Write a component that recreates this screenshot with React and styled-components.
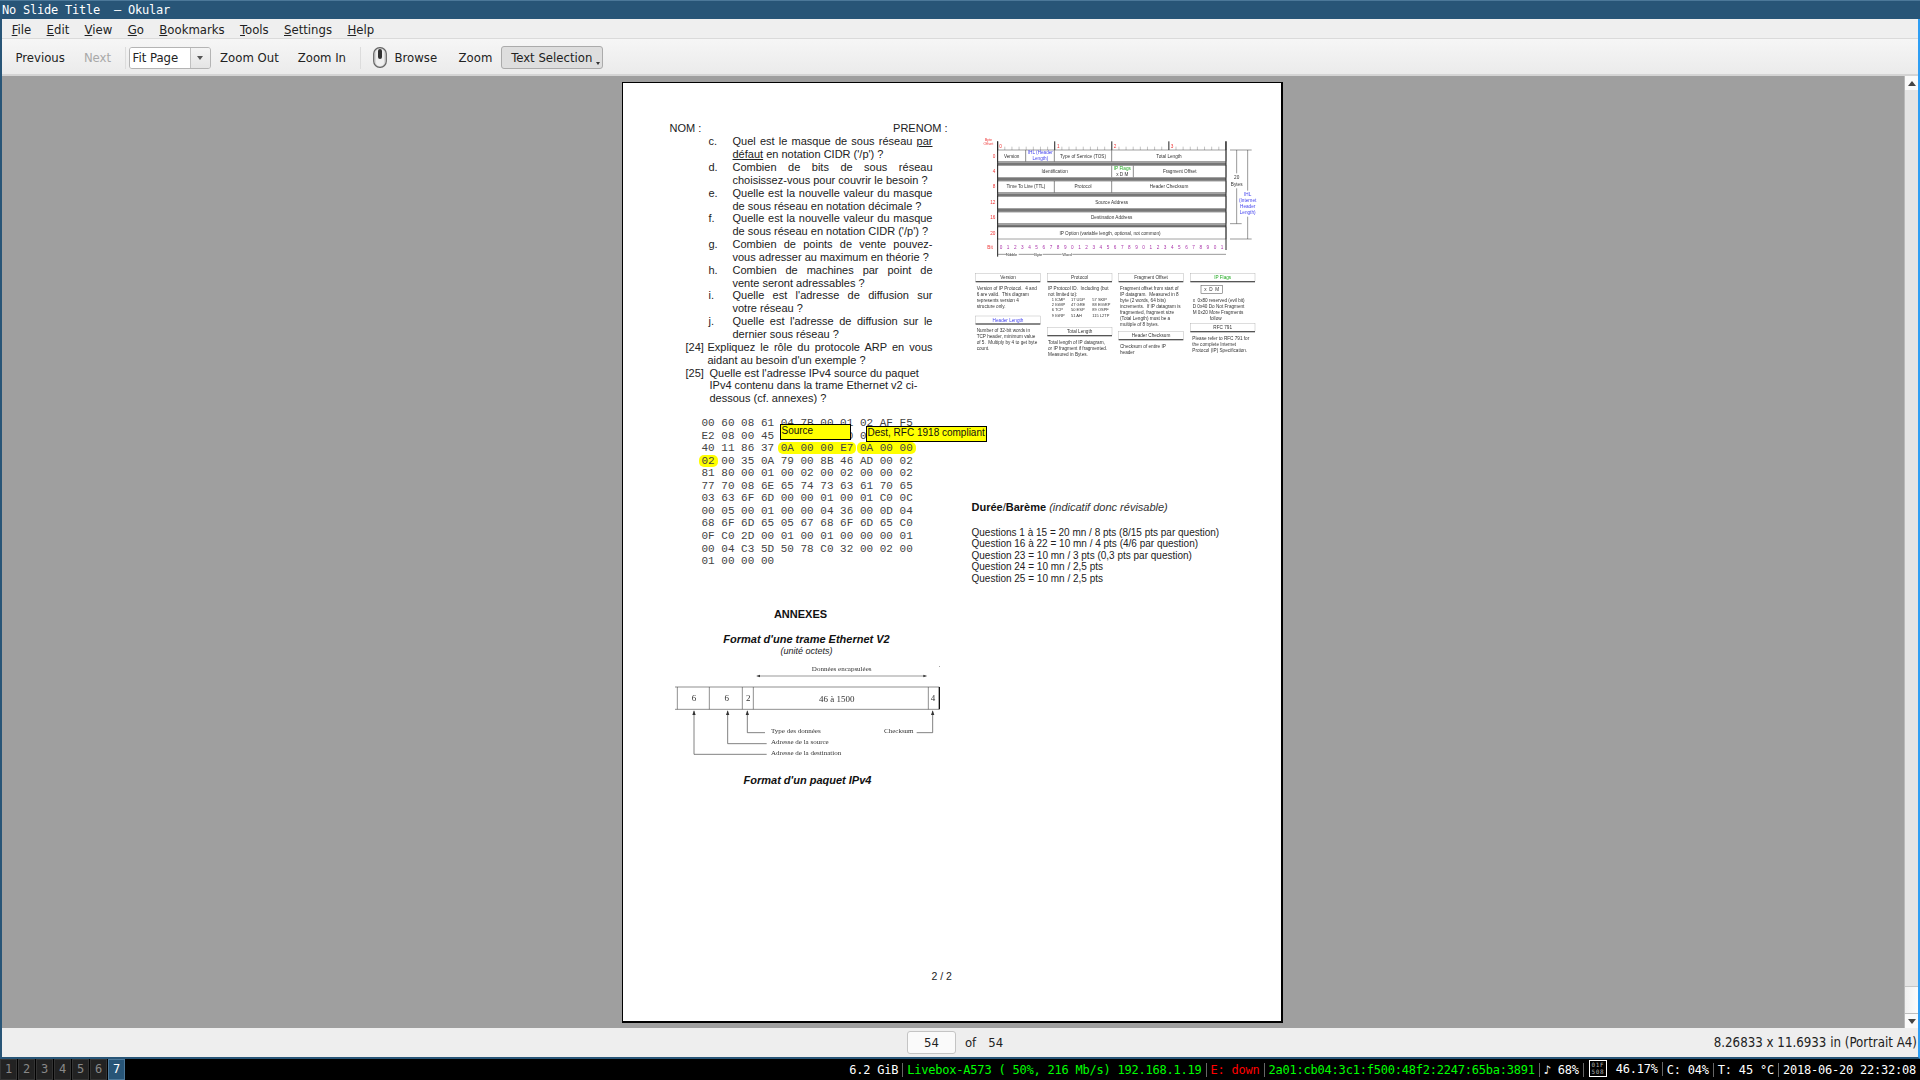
import styled, { createGlobalStyle } from 'styled-components';

const GlobalStyle = createGlobalStyle`
  html, body {
    margin: 0;
    padding: 0;
    width: 1920px;
    height: 1080px;
    overflow: hidden;
    background: #000;
  }
`;

const UI_FONT = '"DejaVu Sans Condensed", "DejaVu Sans", sans-serif';
const MONO_FONT = '"DejaVu Sans Mono", monospace';
const DOC_FONT = '"Liberation Sans", Arial, sans-serif';

// WINDOW
const Window = styled.div`
  width: 1920px;
  height: 1059px;
  box-sizing: border-box;
  display: flex;
  flex-direction: column;
  border-left: 2px solid #285577;
  border-right: 2px solid #2e9ef4;
  border-bottom: 2px solid #285577;
  background: #efefef;
`;

const TitleBar = styled.div`
  height: 19px;
  margin-left: -2px;
  margin-right: -2px;
  box-sizing: border-box;
  border-top: 1px solid #4c7899;
  background: #285577;
  color: #fff;
  font: 12px/18px ${MONO_FONT};
  letter-spacing: -0.22px;
  padding-left: 2px;
  white-space: pre;
`;

const MenuBar = styled.div`
  height: 20px;
  box-sizing: border-box;
  display: flex;
  align-items: center;
  padding: 1px 0 0 2px;
  background: #efefef;
  border-bottom: 1px solid #dadada;
  font: 13px ${UI_FONT};
  font-stretch: condensed;
  color: #222;
`;

const MenuItem = styled.span`
  padding: 0 7.7px;
  u {
    text-underline-offset: 1px;
  }
`;

const ToolBar = styled.div`
  height: 37px;
  box-sizing: border-box;
  display: flex;
  align-items: center;
  padding: 2px 0 0 4px;
  background: linear-gradient(#f6f6f6, #ebebeb);
  border-bottom: 2px solid #d4d4d4;
  font: 13px ${UI_FONT};
  font-stretch: condensed;
  color: #222;
`;

const ToolButton = styled.span`
  display: flex;
  align-items: center;
  gap: 7px;
  padding: 0 9.5px;
  color: ${(p) => (p.$disabled ? '#a8a8a8' : '#222')};
`;

const BrowseButton = styled(ToolButton)`
  gap: 8px;
  padding: 0 12px 0 9px;
`;

const ToolSeparator = styled.span`
  width: 1px;
  height: 22px;
  margin: 0 3px 0 4px;
  background: #dcdcdc;
`;

const Combo = styled.div`
  width: 82px;
  height: 22px;
  box-sizing: border-box;
  display: flex;
  border: 1px solid #b4b4b4;
  border-radius: 3px;
  overflow: hidden;
`;

const ComboValue = styled.span`
  flex: 1;
  padding-left: 3px;
  background: #fff;
  line-height: 20px;
`;

const ComboArrow = styled.span`
  width: 19px;
  border-left: 1px solid #c0c0c0;
  background: linear-gradient(#f4f4f4, #e4e4e4);
  display: flex;
  align-items: center;
  justify-content: center;
  &::after {
    content: '';
    border-left: 3.5px solid transparent;
    border-right: 3.5px solid transparent;
    border-top: 4px solid #555;
  }
`;

const ActiveButton = styled.span`
  position: relative;
  width: 102px;
  height: 23px;
  box-sizing: border-box;
  margin-left: -1px;
  text-align: center;
  line-height: 21px;
  background: #dedede;
  border: 1px solid #ababab;
  border-radius: 3px;
  &::after {
    content: '';
    position: absolute;
    right: 2px;
    bottom: 3px;
    border-left: 2.5px solid transparent;
    border-right: 2.5px solid transparent;
    border-top: 3px solid #333;
  }
`;

// DOCUMENT AREA
const Main = styled.div`
  flex: 1;
  display: flex;
  min-height: 0;
`;

const Viewport = styled.div`
  flex: 1;
  display: flex;
  justify-content: center;
  align-items: flex-start;
  padding: 6px 2px 0 0;
  background: #9f9f9f;
  overflow: hidden;
`;

const Page = styled.div`
  width: 661px;
  height: 941px;
  box-sizing: border-box;
  flex-shrink: 0;
  display: grid;
  grid-template-columns: 290px 1fr;
  border: 1px solid #000;
  border-right-width: 2px;
  border-bottom-width: 2px;
  background: #fff;
  color: #222;
  font: 11px ${DOC_FONT};
`;

const LeftColumn = styled.div`
  padding: 38.5px 0 0 47px;
  width: 290px;
  box-sizing: border-box;
`;

const RightColumn = styled.div`
  padding-top: 37px;
  margin-left: 47px;
`;

const NameRow = styled.div`
  width: 278px;
  display: flex;
  justify-content: space-between;
  line-height: 12.85px;
  margin-bottom: 1px;
`;

const Question = styled.div`
  display: grid;
  grid-template-columns: ${(p) => p.$label}px ${(p) => p.$width}px;
  margin-left: ${(p) => p.$indent}px;
  line-height: 12.85px;
`;

const QuestionLine = styled.div`
  text-align: left;
  text-align-last: ${(p) => (p.$justify ? 'justify' : 'left')};
  white-space: ${(p) => (p.$justify ? 'normal' : 'nowrap')};
`;

const HexDump = styled.div`
  position: relative;
  margin: 12px 0 0 32px;
  font: 11px/12.55px "Liberation Mono", "Courier New", monospace;
  color: #444;
  white-space: pre;
`;

const Mark = styled.span`
  background: #ffff00;
  border-radius: 5px;
  padding: 0 3px;
  margin: 0 -3px;
`;

const Note = styled.div`
  position: absolute;
  left: ${(p) => p.$left}px;
  top: ${(p) => p.$top}px;
  width: ${(p) => p.$width}px;
  height: 16px;
  box-sizing: border-box;
  padding-left: 1px;
  border: 1px solid #000;
  border-bottom-width: 1.5px;
  background: #ffff00;
  color: #111;
  font: 10px/12px ${DOC_FONT};
`;

const Heading = styled.div`
  width: 278px;
  box-sizing: border-box;
  margin-top: ${(p) => p.$top}px;
  padding-right: ${(p) => p.$shift}px;
  text-align: center;
  line-height: 13px;
  font-weight: bold;
  font-style: ${(p) => (p.$italic ? 'italic' : 'normal')};
  color: #111;
`;

const Unit = styled.div`
  width: 278px;
  box-sizing: border-box;
  padding-right: 4px;
  text-align: center;
  font-size: 9px;
  line-height: 10px;
  font-style: italic;
`;

const PageNumber = styled.div`
  margin: 183px 0 0 262px;
  font-size: 10.5px;
  line-height: 13px;
  white-space: nowrap;
`;

const Figure = styled.svg`
  display: block;
  filter: blur(0.35px);
  margin-top: ${(p) => p.$top || 0}px;
`;

const Duration = styled.div`
  margin: 131px 0 14px 12px;
  line-height: 12px;
  b {
    color: #111;
  }
  i {
    color: #333;
  }
`;

const Scale = styled.div`
  margin-left: 12px;
  font-size: 10px;
  line-height: 11.4px;
  white-space: nowrap;
`;

// SCROLLBAR
const ScrollBar = styled.div`
  width: 13px;
  display: flex;
  flex-direction: column;
  background: #e4e4e4;
  border-left: 1px solid #b9b9b9;
`;

const ScrollArrow = styled.div`
  height: 14px;
  flex-shrink: 0;
  display: flex;
  align-items: center;
  justify-content: center;
  background: #fafafa;
  &::after {
    content: '';
    border-left: 4px solid transparent;
    border-right: 4px solid transparent;
    ${(p) => (p.$up ? 'border-bottom: 5px solid #444;' : 'border-top: 5px solid #444;')}
  }
`;

const ScrollThumb = styled.div`
  flex: 1;
  background: #e4e4e4;
  border-bottom: 1px solid #c6c6c6;
`;

const ScrollTrack = styled.div`
  height: 26px;
  background: linear-gradient(90deg, #f0f0f0, #fcfcfc);
  border-bottom: 1px solid #bdbdbd;
`;

// BOTTOM BAR
const PageBar = styled.div`
  height: 29px;
  flex-shrink: 0;
  display: grid;
  grid-template-columns: 1fr auto 1fr;
  align-items: center;
  background: #eeeeee;
  font: 13px ${UI_FONT};
  font-stretch: condensed;
  color: #222;
`;

const PageControls = styled.div`
  display: flex;
  align-items: center;
  padding-right: 10px;
`;

const PageInput = styled.span`
  width: 49px;
  height: 23px;
  box-sizing: border-box;
  border: 1px solid #c4c4c4;
  border-radius: 3px;
  background: #fafafa;
  text-align: center;
  line-height: 21px;
`;

const PageLabel = styled.span`
  margin-left: ${(p) => p.$gap}px;
`;

const PageSize = styled.div`
  grid-column: 3;
  text-align: right;
  white-space: nowrap;
  padding-right: 1px;
  font-size: 13.2px;
`;

// I3 PANEL
const Panel = styled.div`
  height: 21px;
  display: flex;
  align-items: center;
  background: #000;
  font: 12px ${MONO_FONT};
  letter-spacing: -0.22px;
  white-space: pre;
`;

const Workspaces = styled.div`
  display: flex;
  gap: 1px;
`;

const Workspace = styled.span`
  width: 17px;
  height: 21px;
  box-sizing: border-box;
  text-align: center;
  line-height: 19px;
  border: 1px solid ${(p) => (p.$active ? '#4c7899' : '#333')};
  background: ${(p) => (p.$active ? '#285577' : '#222')};
  color: ${(p) => (p.$active ? '#fff' : '#888')};
`;

const StatusLine = styled.div`
  margin-left: auto;
  display: flex;
  align-items: center;
`;

const Block = styled.span`
  padding: 0 4px;
  height: 14px;
  line-height: 14px;
  color: ${(p) => p.$color || '#fff'};
  border-right: ${(p) => (p.$last ? '0' : '1px solid #666')};
  position: relative;
  top: ${(p) => (p.$raised ? '-1px' : '0')};
`;

const HexIcon = styled.span`
  width: 18px;
  height: 17px;
  box-sizing: border-box;
  margin: -3px 5px 0 5px;
  border: 1px solid #fff;
  color: #aaa;
  font: 6px/7px ${MONO_FONT};
  letter-spacing: 0.6px;
  text-align: center;
  white-space: pre-line;
`;

const MENU = [
  ['F', 'ile'],
  ['E', 'dit'],
  ['V', 'iew'],
  ['G', 'o'],
  ['B', 'ookmarks'],
  ['T', 'ools'],
  ['S', 'ettings'],
  ['H', 'elp'],
];

const QUESTIONS = [
  ['c.', [[<>Quel est le masque de sous réseau <u>par</u></>, true], [<><u>défaut</u> en notation CIDR ('/p') ?</>]]],
  ['d.', [['Combien de bits de sous réseau', true], ['choisissez-vous pour couvrir le besoin ?']]],
  ['e.', [['Quelle est la nouvelle valeur du masque', true], ['de sous réseau en notation décimale ?']]],
  ['f.', [['Quelle est la nouvelle valeur du masque', true], ["de sous réseau en notation CIDR ('/p') ?"]]],
  ['g.', [['Combien de points de vente pouvez-', true], ['vous adresser au maximum en théorie ?']]],
  ['h.', [['Combien de machines par point de', true], ['vente seront adressables ?']]],
  ['i.', [["Quelle est l'adresse de diffusion sur", true], ['votre réseau ?']]],
  ['j.', [["Quelle est l'adresse de diffusion sur le", true], ['dernier sous réseau ?']]],
];

const HEX_ROWS = [
  '00 60 08 61 04 7B 00 01 02 AF F5',
  'E2 08 00 45 00 00 71 00 00 00 00',
  <>40 11 86 37 <Mark>0A 00 00 E7</Mark> <Mark>0A 00 00</Mark></>,
  <><Mark>02</Mark> 00 35 0A 79 00 8B 46 AD 00 02</>,
  '81 80 00 01 00 02 00 02 00 00 02',
  '77 70 08 6E 65 74 73 63 61 70 65',
  '03 63 6F 6D 00 00 01 00 01 C0 0C',
  '00 05 00 01 00 00 04 36 00 0D 04',
  '68 6F 6D 65 05 67 68 6F 6D 65 C0',
  '0F C0 2D 00 01 00 01 00 00 00 01',
  '00 04 C3 5D 50 78 C0 32 00 02 00',
  '01 00 00 00',
];

const SCALE = [
  'Questions 1 à 15 = 20 mn / 8 pts (8/15 pts par question)',
  'Question 16 à 22 = 10 mn / 4 pts (4/6 par question)',
  'Question 23 = 10 mn / 3 pts (0,3 pts par question)',
  'Question 24 = 10 mn / 2,5 pts',
  'Question 25 = 10 mn / 2,5 pts',
];

const MouseIcon = () => (
  <svg width="14" height="21" viewBox="0 0 14 21">
    <rect x="0.7" y="0.7" width="12.6" height="19.6" rx="6" fill="#d8d8d8" stroke="#666" strokeWidth="1.2" />
    <rect x="3" y="2" width="8" height="17" rx="4" fill="#f0f0f0" />
    <rect x="5" y="2" width="4" height="10" rx="2" fill="#333" />
  </svg>
);

// IP header figure, coords are 3x the page pixels
const IP_ROWS = [90, 137, 183, 230, 276, 321];
const IP_DIVIDERS = [
  [0, 197], [0, 283], [0, 455],
  [1, 455], [1, 520],
  [2, 283], [2, 455],
];
const IP_CELLS = [
  [155, 108, 'Version'], [369, 108, 'Type of Service (TOS)'], [627, 108, 'Total Length'],
  [284, 154, 'Identification'], [659, 154, 'Fragment Offset'], [487, 162, 'x  D  M'],
  [198, 200, 'Time To Live (TTL)'], [369, 200, 'Protocol'], [627, 200, 'Header Checksum'],
  [455, 246, 'Source Address'], [455, 293, 'Destination Address'],
  [450, 340, 'IP Option (variable length, optional, not common)'],
];
const OFFSETS = [[108, '0'], [153, '4'], [200, '8'], [246, '12'], [293, '16'], [340, '20']];
const CARDS = [
  [47, 461, 'Version', '#333'], [47, 588, 'Header Length', '#4444ee'],
  [262, 461, 'Protocol', '#333'], [262, 623, 'Total Length', '#333'],
  [476, 461, 'Fragment Offset', '#333'], [476, 635, 'Header Checksum', '#333'],
  [691, 461, 'IP Flags', '#22aa22'], [691, 611, 'RFC 791', '#333'],
];
const CARD_TEXT = [
  [50, 505, ['Version of IP Protocol.  4 and', '6 are valid.  This diagram', 'represents version 4', 'structure only.']],
  [50, 632, ['Number of 32-bit words in', 'TCP header, minimum value', 'of 5.  Multiply by 4 to get byte', 'count.']],
  [264, 505, ['IP Protocol ID.  Including (but', 'not limited to):']],
  [264, 667, ['Total length of IP datagram,', 'or IP fragment if fragmented.', 'Measured in Bytes.']],
  [480, 505, ['Fragment offset from start of', 'IP datagram.  Measured in 8', 'byte (2 words, 64 bits)', 'increments.  If IP datagram is', 'fragmented, fragment size', '(Total Length) must be a', 'multiple of 8 bytes.']],
  [480, 679, ['Checksum of entire IP', 'header']],
  [698, 541, ['x  0x80 reserved (evil bit)', 'D 0x40 Do Not Fragment', 'M 0x20 More Fragments']],
  [697, 655, ['Please refer to RFC 791 for', 'the complete Internet', 'Protocol (IP) Specification.']],
];
const PROTOCOLS = [
  [275, ['1 ICMP', '2 IGMP', '6 TCP', '9 IGRP']],
  [333, ['17 UDP', '47 GRE', '50 ESP', '51 AH']],
  [397, ['57 SKIP', '88 EIGRP', '89 OSPF', '115 L2TP']],
];

const IpHeaderFigure = () => {
  const ticks = Array.from({ length: 33 }, (_, i) => 113 + i * 21.4);
  return (
    <Figure width="320" height="250" viewBox="0 0 960 750" fontFamily="Liberation Sans, sans-serif" fontSize="14" fill="#333">
      <text x="85" y="62" fill="#e33" textAnchor="middle" fontSize="11">Byte</text>
      <text x="85" y="76" fill="#e33" textAnchor="middle" fontSize="11">Offset</text>
      {ticks.map((x, i) => (
        <line key={i} x1={x} x2={x} y1={i % 8 === 0 ? 64 : 80} y2="90" stroke={i % 8 === 0 ? '#222' : '#888'} strokeWidth={i % 8 === 0 ? 3 : 1.5} />
      ))}
      {[[122, '0'], [295, '1'], [465, '2'], [636, '3']].map(([x, t]) => (
        <text key={t} x={x} y="84" fill="#e33" textAnchor="middle">{t}</text>
      ))}
      {IP_ROWS.map((y, i) => (
        <g key={y}>
          <rect x="113" y={y} width="685" height={i === 5 ? 36 : 35} fill="#fff" stroke="#444" strokeWidth="1.5" />
          {i < 5 && <rect x="113" y={y + 37} width="685" height="8" fill="#777" />}
        </g>
      ))}
      {IP_DIVIDERS.map(([row, x]) => (
        <line key={`${row}-${x}`} x1={x} x2={x} y1={IP_ROWS[row]} y2={IP_ROWS[row] + 35} stroke="#555" strokeWidth="2" />
      ))}
      <line x1="113" x2="113" y1="64" y2="410" stroke="#222" strokeWidth="3" />
      <line x1="798" x2="798" y1="64" y2="390" stroke="#222" strokeWidth="3" />
      {IP_CELLS.map(([x, y, t]) => (
        <text key={t} x={x} y={y + 5} textAnchor="middle">{t}</text>
      ))}
      <text x="241" y="103" textAnchor="middle" fill="#4444ee">IHL (Header</text>
      <text x="241" y="120" textAnchor="middle" fill="#4444ee">Length)</text>
      <text x="487" y="150" textAnchor="middle" fill="#22aa22">IP Flags</text>
      {OFFSETS.map(([y, t]) => (
        <text key={t} x="106" y={y + 5} textAnchor="end" fill="#e33">{t}</text>
      ))}
      <text x="90" y="386" textAnchor="middle" fill="#e33">Bit</text>
      {ticks.slice(0, 32).map((x, i) => (
        <text key={i} x={x + 10} y="386" textAnchor="middle" fill="#aa33aa">{i % 10}</text>
      ))}
      <line x1="113" x2="798" y1="403" y2="403" stroke="#333" strokeWidth="1.5" />
      <rect x="140" y="396" width="36" height="14" fill="#fff" />
      <rect x="222" y="396" width="26" height="14" fill="#fff" />
      <rect x="305" y="396" width="32" height="14" fill="#fff" />
      <text x="155" y="407" textAnchor="middle" fontSize="12">Nibble</text>
      <text x="235" y="407" textAnchor="middle" fontSize="12">Byte</text>
      <text x="321" y="407" textAnchor="middle" fontSize="12">Word</text>
      <path d="M810 90H875M810 311H845M810 357H875M830 90V160M830 205V311M863 90V212M863 290V357" stroke="#333" strokeWidth="1.5" fill="none" />
      <text x="830" y="178" textAnchor="middle">20</text>
      <text x="830" y="197" textAnchor="middle">Bytes</text>
      {[['IHL', 227], ['(Internet', 246], ['Header', 264], ['Length)', 282]].map(([t, y]) => (
        <text key={t} x="863" y={y} textAnchor="middle" fill="#4444ee">{t}</text>
      ))}
      {CARDS.map(([x, y, t, color]) => (
        <g key={t}>
          <rect x={x} y={y} width="194" height="24" fill="#fff" stroke="#999" strokeWidth="1" />
          <rect x={x} y={y + 22} width="194" height="4" fill="#555" />
          <text x={x + 97} y={y + 17} textAnchor="middle" fill={color}>{t}</text>
        </g>
      ))}
      {CARD_TEXT.map(([x, y, lines]) =>
        lines.map((t, i) => (
          <text key={t} x={x} y={y + 4 + i * 18} xmlSpace="preserve">{t}</text>
        ))
      )}
      {PROTOCOLS.map(([x, lines]) =>
        lines.map((t, i) => (
          <text key={t} x={x} y={542 + i * 16} fontSize="12">{t}</text>
        ))
      )}
      <rect x="723" y="497" width="64" height="24" fill="#fff" stroke="#444" strokeWidth="1.5" />
      <text x="755" y="514" textAnchor="middle" xmlSpace="preserve">x  D  M</text>
      <text x="767" y="599" textAnchor="middle">follow</text>
    </Figure>
  );
};

// Ethernet frame figure, coords are 3x the page pixels
const EthernetFigure = () => (
  <Figure $top={5} width="290" height="110" viewBox="30 180 870 330" fontFamily="Liberation Serif, serif" fontSize="21" fill="#333">
    <text x="545" y="210" textAnchor="middle">Données encapsulées</text>
    <path d="M290 225H800" stroke="#333" strokeWidth="1.5" />
    <path d="M290 225l10-4v8zM800 225l-10-4v8z" fill="#333" />
    <rect x="838" y="196" width="2" height="2" fill="#333" />
    <path d="M45 258H838M45 325H838M52 258V325M148 258V325M247 258V325M280 258V325M805 258V325" stroke="#444" strokeWidth="1.8" fill="none" />
    <path d="M838 258V325" stroke="#111" strokeWidth="4" />
    <text x="102" y="300" textAnchor="middle" fontSize="27">6</text>
    <text x="200" y="300" textAnchor="middle" fontSize="27">6</text>
    <text x="265" y="300" textAnchor="middle" fontSize="27">2</text>
    <text x="530" y="302" textAnchor="middle" fontSize="27">46 à 1500</text>
    <text x="819" y="300" textAnchor="middle" fontSize="27">4</text>
    <path d="M102 330V460H320M203 330V428H320M262 330V395H315M818 330V395H770" stroke="#444" strokeWidth="2" fill="none" />
    <path d="M102 328l-5 14h10zM203 328l-5 14h10zM262 328l-5 14h10zM818 328l-5 14h10z" fill="#333" />
    <text x="333" y="397">Type des données</text>
    <text x="333" y="428">Adresse de la source</text>
    <text x="333" y="463">Adresse de la destination</text>
    <text x="672" y="397">Checksum</text>
  </Figure>
);

export default function App() {
  return (
    <>
      <GlobalStyle />
      <Window>
        <TitleBar>No Slide Title  — Okular</TitleBar>
        <MenuBar>
          {MENU.map(([key, rest]) => (
            <MenuItem key={key}><u>{key}</u>{rest}</MenuItem>
          ))}
        </MenuBar>
        <ToolBar>
          <ToolButton>Previous</ToolButton>
          <ToolButton $disabled>Next</ToolButton>
          <ToolSeparator />
          <Combo>
            <ComboValue>Fit Page</ComboValue>
            <ComboArrow />
          </Combo>
          <ToolButton>Zoom Out</ToolButton>
          <ToolButton>Zoom In</ToolButton>
          <ToolSeparator />
          <BrowseButton><MouseIcon />Browse</BrowseButton>
          <ToolButton>Zoom</ToolButton>
          <ActiveButton>Text Selection</ActiveButton>
        </ToolBar>
        <Main>
          <Viewport>
            <Page>
              <LeftColumn>
                <NameRow>
                  <span>NOM :</span>
                  <span>PRENOM :</span>
                </NameRow>
                {QUESTIONS.map(([label, lines]) => (
                  <Question key={label} $indent={39} $label={24} $width={200}>
                    <span>{label}</span>
                    <div>
                      {lines.map(([text, justify], i) => (
                        <QuestionLine key={i} $justify={justify}>{text}</QuestionLine>
                      ))}
                    </div>
                  </Question>
                ))}
                <Question $indent={16} $label={22} $width={225}>
                  <span>[24]</span>
                  <div>
                    <QuestionLine $justify>Expliquez le rôle du protocole ARP en vous</QuestionLine>
                    <QuestionLine>aidant au besoin d'un exemple ?</QuestionLine>
                  </div>
                </Question>
                <Question $indent={16} $label={24} $width={223}>
                  <span>[25]</span>
                  <div>
                    <QuestionLine>Quelle est l'adresse IPv4 source du paquet</QuestionLine>
                    <QuestionLine>IPv4 contenu dans la trame Ethernet v2 ci-</QuestionLine>
                    <QuestionLine>dessous (cf. annexes) ?</QuestionLine>
                  </div>
                </Question>
                <HexDump>
                  {HEX_ROWS.map((row, i) => (
                    <div key={i}>{row}</div>
                  ))}
                  <Note $left={78} $top={7} $width={71}>Source</Note>
                  <Note $left={164} $top={9} $width={121}>Dest, RFC 1918 compliant</Note>
                </HexDump>
                <Heading $top={40} $shift={16}>ANNEXES</Heading>
                <Heading $top={12.5} $shift={4} $italic>Format d'une trame Ethernet V2</Heading>
                <Unit>(unité octets)</Unit>
                <EthernetFigure />
                <Heading $top={2.5} $shift={2} $italic>Format d'un paquet IPv4</Heading>
                <PageNumber>2 / 2</PageNumber>
              </LeftColumn>
              <RightColumn>
                <IpHeaderFigure />
                <Duration>
                  <b>Durée</b>/<b>Barème</b> <i>(indicatif donc révisable)</i>
                </Duration>
                <Scale>
                  {SCALE.map((line) => (
                    <div key={line}>{line}</div>
                  ))}
                </Scale>
              </RightColumn>
            </Page>
          </Viewport>
          <ScrollBar>
            <ScrollArrow $up />
            <ScrollThumb />
            <ScrollTrack />
            <ScrollArrow />
          </ScrollBar>
        </Main>
        <PageBar>
          <span />
          <PageControls>
            <PageInput>54</PageInput>
            <PageLabel $gap={9}>of</PageLabel>
            <PageLabel $gap={12}>54</PageLabel>
          </PageControls>
          <PageSize>8.26833 x 11.6933 in (Portrait A4)</PageSize>
        </PageBar>
      </Window>
      <Panel>
        <Workspaces>
          {[1, 2, 3, 4, 5, 6, 7].map((n) => (
            <Workspace key={n} $active={n === 7}>{n}</Workspace>
          ))}
        </Workspaces>
        <StatusLine>
          <Block>6.2 GiB</Block>
          <Block $color="#00ff00">Livebox-A573 ( 50%, 216 Mb/s) 192.168.1.19</Block>
          <Block $color="#ff0000">E: down</Block>
          <Block $color="#00ff00">2a01:cb04:3c1:f500:48f2:2247:65ba:3891</Block>
          <Block>♪ 68%</Block>
          <HexIcon>{'01F\n508'}</HexIcon>
          <Block $raised>46.17%</Block>
          <Block>C: 04%</Block>
          <Block>T: 45 °C</Block>
          <Block $last>2018-06-20 22:32:08</Block>
        </StatusLine>
      </Panel>
    </>
  );
}
